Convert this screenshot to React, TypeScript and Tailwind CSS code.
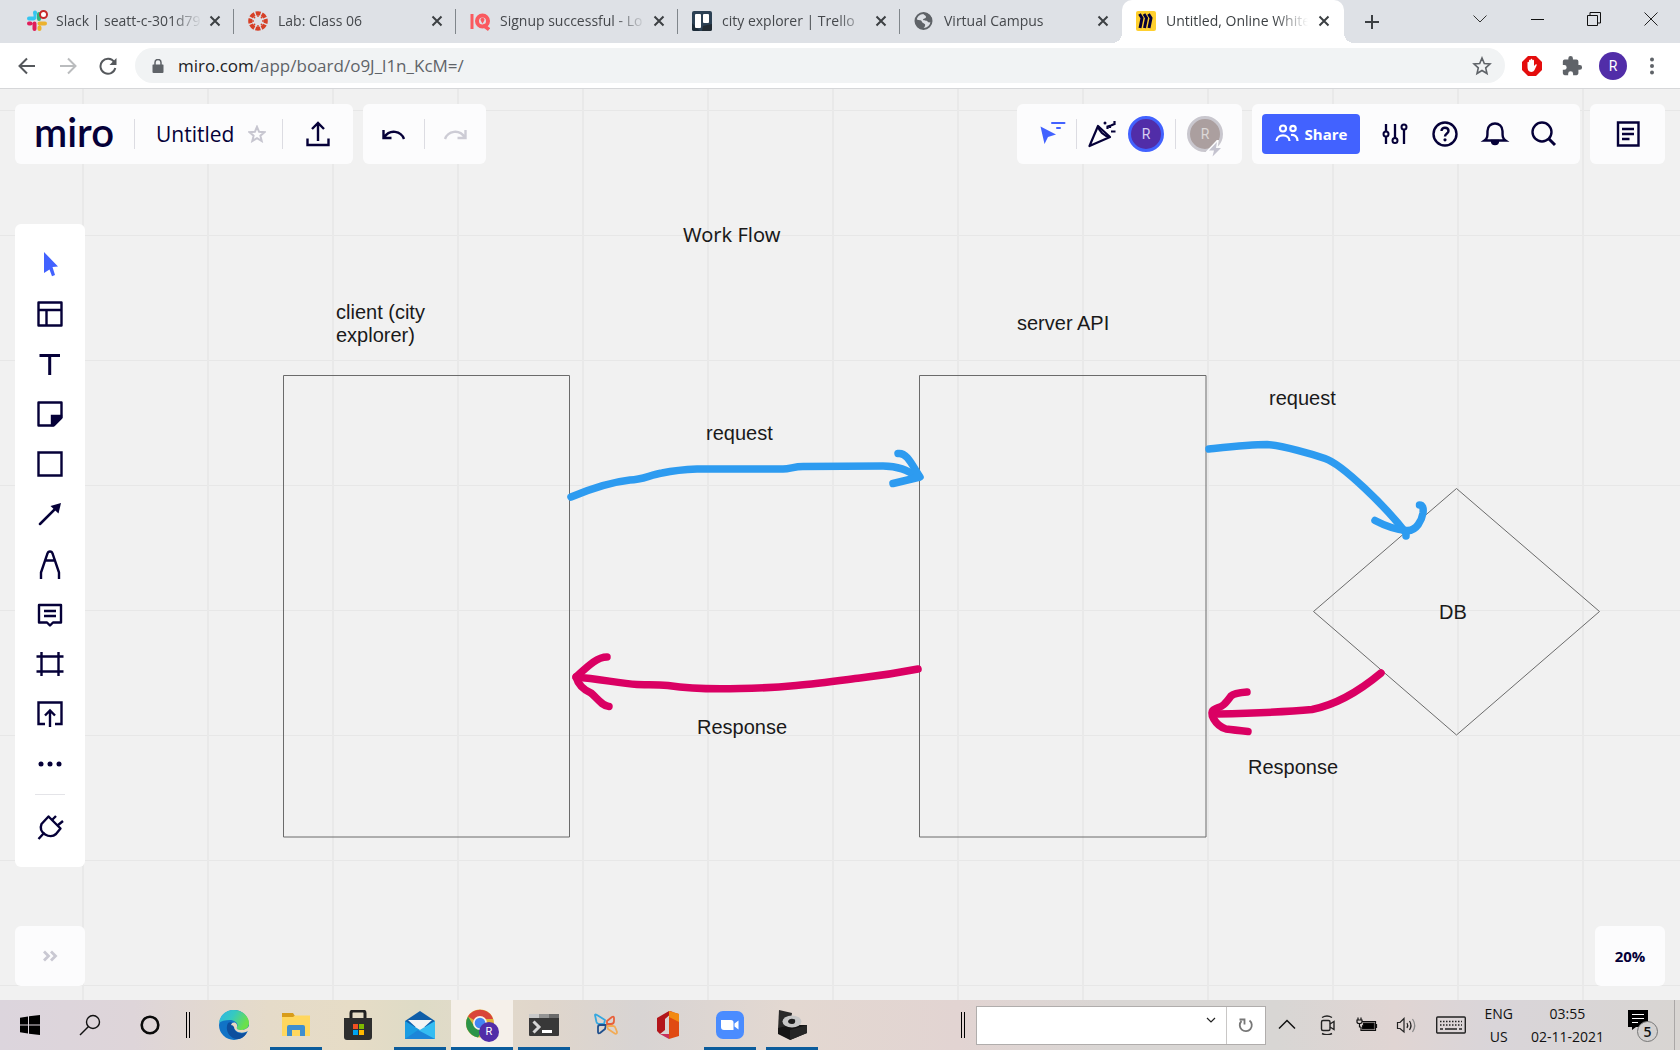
import type { ReactNode } from 'react';

const INK = '#050038';

type IconProps = { size?: number; box?: number; sw?: number; color?: string; fill?: string; children: ReactNode };

function Icon({ size = 30, box, sw = 2, color = INK, fill = 'none', children }: IconProps) {
  const b = box ?? size;
  return (
    <svg
      width={size}
      height={size}
      viewBox={`0 0 ${b} ${b}`}
      fill={fill}
      stroke={color}
      strokeWidth={sw}
      className="block shrink-0"
      aria-hidden="true"
    >
      {children}
    </svg>
  );
}

/* ---------- Browser tabs ---------- */

const SlackIcon = (
  <Icon size={22} sw={4} color="#36c5f0">
    <g strokeLinecap="round">
      <path d="M3 8.500H7.500M9 2.500V3" />
      <path d="M9 8V4" strokeWidth="3" />
      <path d="M13 4V9" stroke="#2eb67d" />
      <path d="M13.500 13.500H19M13.500 17.500V19" stroke="#ecb22e" />
      <path d="M8.500 13.500V19M3 13.500H4.500" stroke="#e01e5a" />
    </g>
    <circle cx="17.500" cy="4.500" r="3.500" stroke="#c62828" strokeWidth="2" fill="#fff" />
  </Icon>
);

const CanvasIcon = (
  <Icon size={20} sw={4} color="#d64027">
    <circle cx="10" cy="10" r="7.800" strokeDasharray="4.800 1.320" strokeDashoffset="2.400" />
    <g fill="#d64027" stroke="none">
      <circle cx="10" cy="5" r="0.900" />
      <circle cx="10" cy="15" r="0.900" />
      <circle cx="5" cy="10" r="0.900" />
      <circle cx="15" cy="10" r="0.900" />
      <circle cx="6.500" cy="6.500" r="0.900" />
      <circle cx="13.500" cy="6.500" r="0.900" />
      <circle cx="6.500" cy="13.500" r="0.900" />
      <circle cx="13.500" cy="13.500" r="0.900" />
    </g>
  </Icon>
);

const IqIcon = (
  <Icon size={20} sw={4} color="#fa5a5f">
    <path d="M2 3V18" strokeWidth="3" />
    <circle cx="12.500" cy="10" r="5.500" />
    <path d="M13 14L19 18.500" strokeWidth="3.500" />
    <path d="M12.500 12.800L10.800 9.800A2 2 0 1 1 14.200 9.800Z" fill="#fa5a5f" stroke="none" />
  </Icon>
);

const TrelloIcon = (
  <Icon size={20} color="none">
    <rect width="20" height="20" rx="2" fill="#2c4154" />
    <path d="M0 12L8 20H2A2 2 0 0 1 0 18Z" fill="#1c2b38" />
    <path d="M11 15L20 13V18A2 2 0 0 1 18 20H10Z" fill="#222b33" />
    <rect x="3" y="3" width="6" height="14" rx="1" fill="#fff" />
    <rect x="11" y="3" width="6" height="9" rx="1" fill="#fff" />
  </Icon>
);

const GlobeIcon = (
  <Icon size={20} sw={2}>
    <circle cx="9.500" cy="10" r="8" stroke="#5f6368" />
    <path
      d="M2 8C5 10 7 8 8 11C9 13 12 12 11 15C10.500 16.500 9 17 9 18C4 18 1 13 2 8ZM9 2C9 4 12 4 12 6C12 8 9 7 9 9C11 10 13 9 14 11C15 12 17 11 18 10C18 5 14 1 9 2Z"
      fill="#5f6368"
      stroke="none"
    />
  </Icon>
);

const MiroTabIcon = (
  <Icon size={20} color="#050038" sw={3}>
    <rect width="20" height="20" rx="2" fill="#ffd02f" stroke="none" />
    <path d="M3.500 3L6 7L4 17M8 3L10.500 7L8.500 17M12.500 3L15 7L13 17" />
  </Icon>
);

const tabs = [
  { title: 'Slack | seatt-c-301d79', icon: SlackIcon },
  { title: 'Lab: Class 06', icon: CanvasIcon },
  { title: 'Signup successful - Lo', icon: IqIcon },
  { title: 'city explorer | Trello', icon: TrelloIcon },
  { title: 'Virtual Campus', icon: GlobeIcon },
  { title: 'Untitled, Online White', icon: MiroTabIcon },
];

function CloseX() {
  return (
    <Icon size={12} color="#3c4043" sw={2}>
      <path d="M1.500 1.500L10.500 10.500M10.500 1.500L1.500 10.500" />
    </Icon>
  );
}

function TabStrip() {
  return (
    <div className="flex h-[43px] bg-[#dee1e6] pl-3">
      {tabs.map((t, i) => {
        const active = i === tabs.length - 1;
        return (
          <div
            key={t.title}
            className={
              active
                ? 'relative flex w-[222px] shrink-0 items-center rounded-t-[10px] bg-white pr-[14px] pb-px pl-[14px]'
                : 'relative flex w-[222px] shrink-0 items-center pr-[13px] pb-px pl-[14px]'
            }
          >
            <span className="flex w-[22px] shrink-0">{t.icon}</span>
            <button
              className={
                active
                  ? 'ml-2 min-w-0 flex-1 overflow-hidden pb-px text-left text-sm whitespace-nowrap text-[#3c4043] [mask-image:linear-gradient(to_right,black_108px,transparent_142px)]'
                  : 'ml-2 min-w-0 flex-1 overflow-hidden pb-px text-left text-sm whitespace-nowrap text-[#45484c] [mask-image:linear-gradient(to_right,black_115px,transparent_146px)]'
              }
            >
              {t.title}
            </button>
            <button className="ml-2 shrink-0" aria-label={`Close ${t.title}`}>
              <CloseX />
            </button>
            {i < 4 && <span className="absolute top-[9px] right-0 h-[25px] w-px bg-[#80868b]" />}
            {active && (
              <>
                <span className="absolute bottom-0 -left-[10px] h-[10px] w-[10px] bg-[radial-gradient(circle_at_0_0,transparent_10px,white_10px)]" />
                <span className="absolute -right-[10px] bottom-0 h-[10px] w-[10px] bg-[radial-gradient(circle_at_100%_0,transparent_10px,white_10px)]" />
              </>
            )}
          </div>
        );
      })}
      <button aria-label="New tab" className="ml-5 flex items-center">
        <Icon size={16} color="#3c4043">
          <path d="M8 1V15M1 8H15" />
        </Icon>
      </button>
      <div className="ml-auto flex h-[37px] shrink-0 items-center">
        <button aria-label="Search tabs" className="flex w-[57px] justify-center">
          <Icon size={14} color="#333" sw={1}>
            <path d="M.5 3.500L7 10L13.500 3.500" />
          </Icon>
        </button>
        <button aria-label="Minimize" className="flex w-[57px] justify-center">
          <Icon size={14} color="#111" sw={1}>
            <path d="M1 7.500H14" />
          </Icon>
        </button>
        <button aria-label="Restore" className="flex w-[57px] justify-center">
          <Icon size={14} color="#111" sw={1}>
            <path d="M.5 3.500H10.500V13.500H.5ZM3 3.500V.5H13.500V11H10.500" />
          </Icon>
        </button>
        <button aria-label="Close window" className="flex w-[58px] justify-center">
          <Icon size={14} color="#222" sw={1}>
            <path d="M.5 .5L13.500 13.500M13.500 .5L.5 13.500" />
          </Icon>
        </button>
      </div>
    </div>
  );
}

function AddressBar() {
  return (
    <div className="flex h-[46px] items-center border-b border-[#d6d7d9] bg-white pr-[19px] pl-[18px]">
      <button aria-label="Back">
        <Icon size={18} color="#55585c">
          <path d="M17 9H2M9 1.500L1.500 9L9 16.500" />
        </Icon>
      </button>
      <button aria-label="Forward" className="ml-[23px]">
        <Icon size={18} color="#babcbe">
          <path d="M1 9H16M9 1.500L16.500 9L9 16.500" />
        </Icon>
      </button>
      <button aria-label="Reload" className="ml-[22px]">
        <Icon size={18} color="#55585c">
          <path d="M15.200 5A7.500 7.500 0 1 0 16.300 11" />
          <path d="M17.500 1V8H10.500Z" fill="#55585c" stroke="none" />
        </Icon>
      </button>
      <div className="ml-[18px] flex h-[35px] flex-1 items-center rounded-full bg-[#f1f3f4] pr-[13px] pl-4">
        <Icon size={14} color="none">
          <path d="M2 5.500H12A.8.8 0 0 1 12.500 6V13A1 1 0 0 1 11.500 14H2.500A1 1 0 0 1 1.500 13V6A.8.8 0 0 1 2 5.500Z" fill="#5f6368" />
          <path d="M4 6V3.500A3 3 0 0 1 10 3.500V6" stroke="#5f6368" strokeWidth="1.500" />
        </Icon>
        <div className="relative ml-[13px] flex-1 text-[17px] leading-6">
          <span aria-hidden="true" className="block text-[#5f6368]">
            <span className="text-[#202124]">miro.com</span>/app/board/o9J_l1n_KcM=/
          </span>
          <input
            aria-label="Address"
            defaultValue="miro.com/app/board/o9J_l1n_KcM=/"
            className="absolute inset-0 w-full bg-transparent text-transparent outline-none"
          />
        </div>
        <button aria-label="Bookmark">
          <Icon size={20} color="#5f6368" sw={1.6}>
            <path d="M10 2L12.300 7.500L18 8L13.700 11.900L15 17.500L10 14.500L5 17.500L6.300 11.900L2 8L7.700 7.500Z" />
          </Icon>
        </button>
      </div>
      <button aria-label="Ad blocker" className="ml-4">
        <Icon size={22} color="none">
          <path d="M7 1H15L21 7V15L15 21H7L1 15V7Z" fill="#e40d0d" />
          <path
            d="M6.500 10V7.500C6.500 6.500 8 6.500 8 7.500V5.500C8 4.500 9.600 4.500 9.600 5.500V4.500C9.600 3.500 11.300 3.500 11.300 4.500V5.500C11.300 4.500 13 4.500 13 5.500V11L14.500 9.500C15.500 9 16.200 9.800 15.500 10.700L13.500 15C12.500 17.500 8.500 17.500 7.300 15.500C6.500 14 6.500 12 6.500 10Z"
            fill="#fff"
          />
        </Icon>
      </button>
      <button aria-label="Extensions" className="ml-[18px]">
        <Icon size={22} box={24} color="none" fill="#5f6368">
          <path d="M20.500 11H19V7a2 2 0 0 0-2-2h-4V3.500a2.500 2.500 0 0 0-5 0V5H4a2 2 0 0 0-2 2v3.800h1.500a2.700 2.700 0 0 1 0 5.400H2V20a2 2 0 0 0 2 2h3.800v-1.500a2.700 2.700 0 0 1 5.400 0V22H17a2 2 0 0 0 2-2v-4h1.500a2.500 2.500 0 0 0 0-5z" />
        </Icon>
      </button>
      <button className="ml-4 flex h-7 w-7 items-center justify-center rounded-full bg-[#512da8] font-['Roboto'] text-sm text-white">
        R
      </button>
      <button aria-label="Menu" className="ml-4">
        <Icon size={18} color="none" fill="#5f6368">
          <circle cx="9" cy="2.500" r="2" />
          <circle cx="9" cy="9" r="2" />
          <circle cx="9" cy="15.500" r="2" />
        </Icon>
      </button>
    </div>
  );
}

/* ---------- Board header ---------- */

function Rule({ className = '' }: { className?: string }) {
  return <span className={`h-[30px] w-px bg-[#dcdce2] ${className}`} />;
}

function BoardHeader() {
  return (
    <header className="flex items-start gap-[10px] px-[15px] pt-[15px]">
      <div className="flex h-[60px] items-center rounded-md bg-[#fcfcfd] pr-5 pl-[19px]">
        <a href="#board" className="font-['Lato'] text-[40px] leading-[48px] font-semibold text-[#050038]">
          <span className="block pb-1">miro</span>
        </a>
        <Rule className="ml-5" />
        <button className="ml-[21px] text-[21px] leading-7 font-medium text-[#050038]">Untitled</button>
        <button aria-label="Star board" className="ml-[14px]">
          <Icon size={18} color="#c7c6d0" sw={2}>
            <path d="M9 1.800L11.100 6.800L16.500 7.200L12.400 10.700L13.700 16L9 13.100L4.300 16L5.600 10.700L1.500 7.200L6.900 6.800Z" />
          </Icon>
        </button>
        <Rule className="ml-4" />
        <button aria-label="Export" className="ml-5">
          <Icon size={30} sw={2.4}>
            <path d="M15 22V4.500M9 10L15 4L21 10M4.500 19.500V26H25.500V19.500" />
          </Icon>
        </button>
      </div>
      <div className="flex h-[60px] items-center rounded-md bg-[#fcfcfd] px-[17px]">
        <button aria-label="Undo">
          <Icon size={26} sw={2.4}>
            <path d="M24 18C21 10 10 7.500 4 16.500M3.500 9V17H11.500" />
          </Icon>
        </button>
        <Rule className="mx-[18px]" />
        <button aria-label="Redo">
          <Icon size={26} color="#cdccd5" sw={2.4}>
            <path d="M2 18C5 10 16 7.500 22 16.500M22.500 9V17H14.500" />
          </Icon>
        </button>
      </div>

      <div className="ml-auto flex h-[60px] items-center rounded-md bg-[#fcfcfd] pr-[19px] pl-[22px]">
        <button aria-label="Collaborator cursors">
          <Icon size={30} color="#4262ff">
            <path d="M1.500 7.500L17 15.500L9 18L5.500 25Z" fill="#4262ff" stroke="none" />
            <path d="M13 4H25.500M18 9H21" strokeLinecap="round" />
          </Icon>
        </button>
        <Rule className="ml-[7px]" />
        <button aria-label="Reactions" className="ml-[10px]">
          <Icon size={30} sw={2.2}>
            <path d="M11 7L23 18L2.500 27Z" strokeLinejoin="round" />
            <path d="M11 7C12 12 16.500 17 23 18" />
            <path d="M20.500 10V7.500L24 6.500L27.500 5M27.500 2V6M23 7V9M24 12.500H28.500" />
            <circle cx="18" cy="4" r="1.500" fill={INK} stroke="none" />
          </Icon>
        </button>
        <button className="ml-[11px] flex h-9 w-9 items-center justify-center rounded-full border-[3px] border-[#4262ff] bg-[#512da8] font-['Roboto'] text-sm text-[#d6cdf0]">
          R
        </button>
        <Rule className="ml-[11px]" />
        <button className="relative ml-[11px] flex h-9 w-9 items-center justify-center rounded-full border-[3px] border-[#c9c7ce] bg-[#ab9f9f] font-['Roboto'] text-sm text-[#dcd8d8]">
          R
          <span className="absolute -right-[4px] -bottom-[9px]">
            <Icon size={18} color="#fcfcfd" sw={3} fill="#c4c3cf">
              <path d="M11 2L3 10.500H8L6.500 16.500L15 8H10Z" style={{ paintOrder: 'stroke' }} />
            </Icon>
          </span>
        </button>
      </div>

      <div className="flex h-[60px] items-center rounded-md bg-[#fcfcfd] pr-[22px] pl-[10px]">
        <button className="flex h-10 w-[98px] items-center justify-center gap-[6px] rounded bg-[#4262ff] text-[15px] font-bold text-white">
          <Icon size={24} color="#fff" sw={2.2}>
            <circle cx="8" cy="6.500" r="3" />
            <circle cx="18" cy="6.500" r="2.700" />
            <path d="M1.500 19C1.500 11.500 14.500 11.500 14.500 19M16 13C20 12.500 22.500 15 22.500 19" />
          </Icon>
          Share
        </button>
        <button aria-label="Settings" className="ml-5">
          <Icon size={30}>
            <circle cx="6" cy="15" r="2.500" />
            <circle cx="15" cy="21.500" r="2.500" />
            <circle cx="24" cy="8" r="2.500" />
            <path d="M6 5V12.500M6 17.500V25M15 5V19M24 10.500V25" strokeWidth="2.300" />
          </Icon>
        </button>
        <button aria-label="Help" className="ml-5">
          <Icon size={30} sw={2.400}>
            <circle cx="15" cy="15" r="11.500" />
            <path d="M11.500 12C11.500 7.500 18.500 8 18.500 12C18.500 14.500 15 14.500 15 17.500" />
            <circle cx="15" cy="20.800" r="1.600" fill={INK} stroke="none" />
          </Icon>
        </button>
        <button aria-label="Notifications" className="ml-5">
          <Icon size={30} sw={2.400}>
            <path d="M4.500 21.500C7.500 19.500 7.500 17 7.500 12C7.500 2 22.500 2 22.500 12C22.500 17 22.500 19.500 25.500 21.500Z" />
            <path d="M12 22C12 26 18 26 18 22Z" fill={INK} />
          </Icon>
        </button>
        <button aria-label="Search" className="ml-[18px]">
          <Icon size={30} sw={2.400}>
            <circle cx="14" cy="13" r="9.500" />
            <path d="M20.500 19.500L27 26" strokeWidth="3" />
          </Icon>
        </button>
      </div>

      <div className="flex h-[60px] w-[75px] items-center justify-center rounded-md bg-[#fcfcfd]">
        <button aria-label="Notes">
          <Icon size={30} sw={2.400}>
            <path d="M5 3.500H25.500V26.500H5Z" />
            <path d="M9 10H21M9 15H21M9 20H16.500" />
          </Icon>
        </button>
      </div>
    </header>
  );
}

/* ---------- Left tool palette ---------- */

const tools: { name: string; art: ReactNode }[] = [
  {
    name: 'Select',
    art: <path d="M9 3L23 17.500L17.500 18L20 26L17 27.200L14.500 20.500L9 24Z" fill="#4262ff" stroke="none" />,
  },
  {
    name: 'Templates',
    art: <path d="M3.500 3.500H26.500V26.500H3.500ZM3.500 11H26.500M11.500 11V26.500" strokeLinejoin="round" />,
  },
  {
    name: 'Text',
    art: <path d="M4.500 6.500H25M14.700 6.500V26" strokeWidth="3" />,
  },
  {
    name: 'Sticky note',
    art: (
      <>
        <path d="M3.500 3.500H26.500V18.500L18.500 26.500H3.500Z" strokeLinejoin="round" />
        <path d="M17 26V17H26V19L19 26Z" fill={INK} />
      </>
    ),
  },
  { name: 'Shape', art: <path d="M3.500 3.500H26.500V26.500H3.500Z" /> },
  {
    name: 'Connection line',
    art: (
      <>
        <path d="M5 25L21 9" strokeLinecap="round" strokeWidth="2.500" />
        <path d="M26 4L23.500 14.500L15.500 7Z" fill={INK} stroke="none" />
      </>
    ),
  },
  {
    name: 'Pen',
    art: <path d="M6 30V23.500L12.500 4.500Q13 2.500 15 2.500T17.500 4.500L24 23.500V30M11 11.500H19" />,
  },
  {
    name: 'Comment',
    art: <path d="M4 6H26V23.500H18L15 26.500L12 23.500H4ZM9 12H21M9 17H21" strokeLinejoin="round" />,
  },
  { name: 'Frame', art: <path d="M6.500 3V27M23.500 3V27M1.500 7.500H28.500M1.500 22.500H28.500" /> },
  {
    name: 'Upload',
    art: <path d="M10 25H3.500V3.500H26.500V25H20M15 28V12M10 16.500L15 11.500L20 16.500" />,
  },
  {
    name: 'More tools',
    art: (
      <g fill={INK} stroke="none">
        <circle cx="6" cy="15" r="2.500" />
        <circle cx="15" cy="15" r="2.500" />
        <circle cx="24" cy="15" r="2.500" />
      </g>
    ),
  },
];

function Palette() {
  return (
    <nav className="mt-[60px] ml-[15px] flex w-[70px] flex-col items-center rounded-md bg-white py-[15px]">
      {tools.map((t) => (
        <button key={t.name} aria-label={t.name} className="flex h-[50px] w-[50px] items-center justify-center">
          <Icon size={30} sw={2.4}>
            {t.art}
          </Icon>
        </button>
      ))}
      <span className="mt-[5px] mb-[7px] h-px w-[30px] bg-[#e4e4e8]" />
      <button aria-label="Apps" className="flex h-[50px] w-[50px] items-center justify-center">
        <Icon size={30} sw={2.400}>
          <path d="M13.500 4.500L25.500 16.500L21 22C15 27.500 3 21 6.500 12Z" strokeLinejoin="round" />
          <path d="M17 8L21 4M22.500 13.500L28 9M9.500 20.500L3.500 27" />
        </Icon>
      </button>
    </nav>
  );
}

/* ---------- Diagram ---------- */

function Diagram() {
  return (
    <div className="absolute inset-0 overflow-hidden bg-[linear-gradient(to_right,#e9e9e9_2px,transparent_2px),linear-gradient(to_bottom,#e7e7e7_1px,transparent_1px)] bg-[size:125px_125px] bg-[position:82px_21px] font-['Liberation_Sans'] text-[20px] leading-[23px] text-[#1a1a1a]">
      <svg width="1680" height="911" viewBox="0 89 1680 911" fill="none" className="absolute top-0 left-0" aria-hidden="true">
        <g stroke="#6b6b6b" strokeWidth="1">
          <path d="M283.500 375.500H569.500V837H283.500ZM919.500 375.500H1206V837H919.500Z" />
          <path d="M1456.500 488.500L1599.500 611.500L1456.500 735L1313.500 611.500Z" />
        </g>
        <g stroke="#2d9bf0" strokeWidth="7.500" strokeLinecap="round" strokeLinejoin="round">
          <path d="M571 497C590 489 612 482 630 480C642 480 650 475 662 473C674 470.500 684 469.500 697 469L783 469C790 469 794 466.500 803 466.500L883 466C898 466 907 470 918 477" />
          <path d="M898 453.500C907 452 912 465 920 477L893 483.500" />
          <path d="M1209 449C1228 447 1250 444.500 1267 444.500C1284 446 1312 454 1325 458.500C1342 464 1386 507 1406 533V536" />
          <path d="M1375 520.500Q1391 529 1406 530.500C1417 532 1422 519 1423 513Q1424 505 1419.500 505" />
        </g>
        <g stroke="#da0063" strokeWidth="7.500" strokeLinecap="round" strokeLinejoin="round">
          <path d="M918 669Q890 674.500 860 678C820 683 785 688 740 688.500C710 689.500 685 688 668 685.500C655 684 645 685 637 684.500C620 683.500 600 679 576 677" />
          <path d="M607 657C596 657 586 668 576 677C578 684 584 690 591 693C597 698 602 706 609 706.500" />
          <path d="M1381 673Q1345 703 1312 709.500Q1280 712.500 1217 714" />
          <path d="M1247 692Q1234 693 1231 696C1223 707 1222 706 1215 709C1207 712 1216 726 1226 729Q1234 730 1248 731.500" />
        </g>
      </svg>
      <h1 className="absolute top-[132px] left-[683px] font-['Noto_Sans'] leading-7 whitespace-nowrap">Work Flow</h1>
      <p className="absolute top-[212px] left-[336px] w-[120px]">client (city explorer)</p>
      <p className="absolute top-[223px] left-[1017px] whitespace-nowrap">server API</p>
      <p className="absolute top-[333px] left-[706px]">request</p>
      <p className="absolute top-[298px] left-[1269px]">request</p>
      <p className="absolute top-[627px] left-[697px]">Response</p>
      <p className="absolute top-[667px] left-[1248px]">Response</p>
      <p className="absolute top-[512px] left-[1439px]">DB</p>
    </div>
  );
}

/* ---------- Taskbar ---------- */

const EdgeIcon = (
  <Icon size={32} color="none">
    <defs>
      <linearGradient id="edgeTop" x1="0" y1="0" x2="1" y2="0.400">
        <stop offset="0" stopColor="#2fb4e8" />
        <stop offset="0.500" stopColor="#36c9c0" />
        <stop offset="1" stopColor="#6be04a" />
      </linearGradient>
    </defs>
    <circle cx="16" cy="16" r="15" fill="#1173c6" />
    <path d="M1 14C2 5 9 1 16 1C25 1 31 8 31 14C31 19 27 21 23 21C20 21 18 20 19 18C21 15 17 11 12 11C7 11 3 12 1 14Z" fill="url(#edgeTop)" />
    <path d="M10 14C6 22 13 31 21 30C25 29 28 26 29 23C24 26 16 24 16 18C16 15 13 12 10 14Z" fill="#0d4f9e" />
    <path d="M13 16C14 12 20 13 19 18C18 20 20 21 23 21C27 21 30 19 31 17V21C27 25 17 25 16 18Q15 16 13 16Z" fill="#ead9c2" />
  </Icon>
);

const ExplorerIcon = (
  <Icon size={30} color="none">
    <path d="M1 3H12L14 6V10H1Z" fill="#d89c1a" />
    <path d="M1 7H12L14 5.500H29V26H1Z" fill="#ffd75e" />
    <path d="M6 17Q6 15 8 15H22Q24 15 24 17V26H19V20H11V26H6Z" fill="#3f8fcf" />
  </Icon>
);

const StoreIcon = (
  <Icon size={30} color="none">
    <path d="M8 9V3Q8 1 10 1H20Q22 1 22 3V9" stroke="#222" strokeWidth="3" />
    <path d="M1 8H29V27Q29 30 26 30H4Q1 30 1 27Z" fill="#2e2e2e" />
    <path d="M10 14H15V19H10Z" fill="#f25022" />
    <path d="M16 14H21V19H16Z" fill="#7fba00" />
    <path d="M10 20H15V25H10Z" fill="#00a4ef" />
    <path d="M16 20H21V25H16Z" fill="#ffb900" />
  </Icon>
);

const MailIcon = (
  <Icon size={30} color="none">
    <path d="M0 11L15 1L30 11V17H0Z" fill="#0f5ea8" />
    <path d="M3 10H27L15 21Z" fill="#f4f4f4" />
    <path d="M0 11L30 29H0Z" fill="#1b9de2" />
    <path d="M30 11L8 24L16 29H30Z" fill="#35bdf2" />
    <path d="M13 20L30 29H8L0 29Z" fill="#1c86d8" />
  </Icon>
);

const ChromeIcon = (
  <Icon size={32} color="none">
    <circle cx="14" cy="14.500" r="14" fill="#e0b53a" />
    <path d="M14 14.500L2 7.500A14 14 0 0 1 26 7.500L27 10H14Z" fill="#d9453a" />
    <path d="M2 7.500A14 14 0 0 0 12 28.400L18 19L14 14.500L8 17Z" fill="#2b9449" />
    <circle cx="14" cy="14" r="7" fill="#f6f1ea" />
    <circle cx="14" cy="14" r="5.300" fill="#4285f4" />
  </Icon>
);

const TerminalIcon = (
  <Icon size={30} color="none">
    <rect y="4" width="30" height="22" rx="1" fill="#383838" />
    <path d="M0 8V4H10V8Z" fill="#c9c9c9" />
    <path d="M10 4H20V8H10Z" fill="#949494" />
    <path d="M20 4H30V8H20Z" fill="#6b6b6b" />
    <path d="M4.500 11.500L10 17L4.500 22.500" stroke="#d5d5d5" strokeWidth="3" />
    <path d="M13 21.500H23" stroke="#fff" strokeWidth="3" />
  </Icon>
);

const ButterflyIcon = (
  <Icon size={26} sw={1.800}>
    <g strokeLinejoin="round">
      <path d="M2 3Q2 2 4 3L12 8L11 12H6Q4 12 3.500 10Z" stroke="#35a7df" />
      <path d="M5 20V15Q5 13 7 13H13L12 17L7 21Q5 22 5 20Z" stroke="#20508d" />
      <path d="M14 9L19 5Q21 4 21 6V9Q21 12 18 12H14Z" stroke="#e8603a" />
      <path d="M14 14H20Q22 14 22.500 16L24 20Q24 23 21 21L15 17Z" stroke="#f2ab55" />
    </g>
  </Icon>
);

const OfficeIcon = (
  <Icon size={30} color="none">
    <path d="M4 8L16 1L20 2L12 9V20L7 24L4 21Z" fill="#b3161b" />
    <path d="M16 1L26 4V26L16 29V25V7Z" fill="#e04a12" />
    <path d="M16 1L26 4V12L16 7Z" fill="#f28a13" />
    <path d="M7 24H16V29Z" fill="#c9305a" />
  </Icon>
);

const ZoomIcon = (
  <Icon size={28} color="none">
    <rect width="28" height="28" rx="7" fill="#4a8cff" />
    <path d="M5 9H15Q17.500 9 17.500 11.500V19H8Q5 19 5 16ZM18.500 12.500L22.500 9.500V18.500L18.500 15.500Z" fill="#fff" />
  </Icon>
);

const CubeIcon = (
  <Icon size={30} color="none">
    <path d="M2 0L15 3L13 17L1 20Z" fill="#2a2a2a" />
    <path d="M1 18L14 15L30 15V23L13 30L1 24Z" fill="#151515" />
    <path d="M13 20L30 15V23L13 30Z" fill="#262626" />
    <ellipse cx="15" cy="11.500" rx="9.500" ry="6" fill="#c7c7c7" />
    <path d="M11 11Q13 7.500 18 9.500Q19 14 15 14Q11 14 11 11Z" fill="#1d1d1d" />
  </Icon>
);

const apps: { name: string; icon: ReactNode; running: boolean; active?: boolean }[] = [
  { name: 'Edge', icon: EdgeIcon, running: false },
  { name: 'File Explorer', icon: ExplorerIcon, running: true },
  { name: 'Store', icon: StoreIcon, running: false },
  { name: 'Mail', icon: MailIcon, running: true },
  { name: 'Chrome', icon: ChromeIcon, running: true, active: true },
  { name: 'Terminal', icon: TerminalIcon, running: true },
  { name: 'Editor', icon: ButterflyIcon, running: false },
  { name: 'Office', icon: OfficeIcon, running: false },
  { name: 'Zoom', icon: ZoomIcon, running: true },
  { name: 'Viewer', icon: CubeIcon, running: true },
];

function Grip() {
  return <span className="h-[26px] w-1 shrink-0 border-x border-black" />;
}

function Taskbar() {
  return (
    <footer className="flex h-[50px] items-center bg-[linear-gradient(to_right,#dcd5dd_0%,#ded5d9_8%,#e5dbc9_16%,#e6dcc6_21%,#dedbc6_25%,#e2dacb_29%,#e0d6cb_32%,#d8d4d3_38%,#e3d8d1_47%,#e2d4d2_57%,#d9d6d4_66%,#d8d6d4_76%,#e0d5d3_83%,#d9d5d9_89%,#d8d5d2_100%)] text-[14px] text-[#111]">
      <button aria-label="Start" className="flex w-[60px] justify-center">
        <Icon size={20} color="none" fill="#000">
          <path d="M0 2.800L8 1.500V9.500H0ZM9 1.300L20 0V9.500H9ZM0 10.500H8V18.500L0 17.300ZM9 10.500H20V20L9 18.700Z" />
        </Icon>
      </button>
      <button aria-label="Search Windows" className="flex w-[60px] justify-center">
        <Icon size={22} color="#111" sw={1.4}>
          <circle cx="14" cy="8" r="6.500" />
          <path d="M9.500 12.500L1 21" />
        </Icon>
      </button>
      <button aria-label="Cortana" className="flex w-[60px] justify-center">
        <Icon size={22} color="#0a0a0a" sw={2.600}>
          <circle cx="11" cy="11" r="8.300" />
        </Icon>
      </button>
      <span className="ml-[6px] flex">
        <Grip />
      </span>
      <div className="ml-[13px] flex h-full">
        {apps.map((a) => (
          <button
            key={a.name}
            aria-label={a.name}
            className={
              a.active
                ? 'relative flex h-full w-[62px] items-center justify-center bg-[#f5f0ea]'
                : 'relative flex h-full w-[62px] items-center justify-center'
            }
          >
            {a.icon}
            {a.active && (
              <span className="absolute top-[22px] left-[28px] flex h-5 w-5 items-center justify-center rounded-full bg-[#512da8] font-['Roboto'] text-[11px] text-white">
                R
              </span>
            )}
            {a.running && (
              <span className={a.active ? 'absolute inset-x-0 bottom-0 h-[3px] bg-[#0b5c9c]' : 'absolute inset-x-[5px] bottom-0 h-[3px] bg-[#0b5c9c]'} />
            )}
          </button>
        ))}
      </div>
      <div className="ml-auto flex h-full shrink-0 items-center">
        <Grip />
        <div className="ml-[11px] flex h-[39px] w-[290px] border border-[#b0adac] bg-white">
          <div className="relative flex flex-1 border-r border-[#c9c7c6]">
            <input aria-label="Address toolbar" className="w-full bg-transparent px-2 outline-none" />
            <button aria-label="Show history" className="absolute top-2 right-[10px]">
              <Icon size={10} color="#222" sw={1.2}>
                <path d="M1 3L5 7L9 3" />
              </Icon>
            </button>
          </div>
          <button aria-label="Refresh" className="flex w-[38px] items-center justify-center">
            <Icon size={16} color="#777" sw={1.800}>
              <path d="M11.500 3.500A6 6 0 1 1 3.500 4M1.500 2.500H6.500V7.500" />
            </Icon>
          </button>
        </div>
        <button aria-label="Show hidden icons" className="ml-3">
          <Icon size={18} color="#111" sw={1.5}>
            <path d="M1 12.500L9 4.500L17 12.500" />
          </Icon>
        </button>
        <button aria-label="Meet now" className="ml-[22px]">
          <Icon size={20} color="#222" sw={1.400}>
            <rect x="3.500" y="5.500" width="8.500" height="10" rx="1.500" />
            <path d="M12 9L16 6.500V14.500L12 12M4 2.500Q9 -.5 14 2.500M4 18.500Q9 21 14 18.500" />
          </Icon>
        </button>
        <button aria-label="Battery" className="ml-[18px]">
          <Icon size={22} color="#111" sw={1.200}>
            <path d="M6 7.500H19.500V16.500H5V13" />
            <path d="M7.500 9H18V15H6.500V12L7.500 11Z" fill="#000" />
            <path d="M20.500 10V14" />
            <path d="M2 3.500V6M5 3.500V6M1 6H6V8Q6 9.500 3.500 9.500Q1 9.500 1 8ZM3.500 9.500V13H5" />
          </Icon>
        </button>
        <button aria-label="Volume" className="ml-[18px]">
          <Icon size={22} color="#222" sw={1.200}>
            <path d="M1.500 8.500H4L8 4.500V18L4 14.500H1.500Z" />
            <path d="M11 9Q12.500 11.500 11 14M13.500 7Q16.500 11.500 13.500 16" />
            <path d="M16.500 5Q21 11.500 16.500 18" stroke="#888" />
          </Icon>
        </button>
        <button aria-label="Touch keyboard" className="ml-[18px]">
          <Icon size={30} color="#222" sw={1.400}>
            <rect x=".7" y="7" width="28.600" height="16" rx="1" />
            <path d="M4 11.500H26M4 15H26" strokeDasharray="1.500 1.500" />
            <path d="M4 19H7M9 19H21M23 19H26" />
          </Icon>
        </button>
        <div className="ml-[18px] text-center leading-[23px]">
          <div>ENG</div>
          <div>US</div>
        </div>
        <div className="ml-[18px] text-center leading-[23px]">
          <div>03:55</div>
          <div>02-11-2021</div>
        </div>
        <button className="relative mr-[14px] ml-[24px] flex h-[30px] w-[32px]" aria-label="Notification center, 5 new">
          <Icon size={22} color="none">
            <path d="M0 0H20V17H8L4 20V17H0Z" fill="#000" />
            <path d="M4 4.500H16M4 8.500H16M4 12.500H10" stroke="#fff" strokeWidth="1.200" />
          </Icon>
          <span className="absolute top-[11px] left-[9px] flex h-[21px] w-[21px] items-center justify-center rounded-full border border-[#777] bg-[#d3d1d0] text-sm font-semibold">
            5
          </span>
        </button>
        <span className="mr-[5px] h-full w-px bg-[#aaa7a6]" />
      </div>
    </footer>
  );
}

export default function App() {
  return (
    <div className="flex min-h-screen flex-col overflow-hidden font-['Open_Sans','Noto_Sans',sans-serif]">
      <TabStrip />
      <AddressBar />
      <main className="relative flex flex-1 flex-col bg-[#f1f1f1]">
        <Diagram />
        <div className="relative flex flex-1 flex-col items-stretch">
          <BoardHeader />
          <div className="flex">
            <Palette />
          </div>
          <div className="mt-auto flex justify-between px-[15px] pb-[14px]">
            <button aria-label="Expand" className="flex h-[60px] w-[70px] items-center justify-center rounded-md bg-[#fcfcfd]">
              <Icon size={16} color="#c9c8d2" sw={2.800}>
                <path d="M2 3.500L6.500 8L2 12.500M9 3.500L13.500 8L9 12.500" />
              </Icon>
            </button>
            <button className="flex h-[60px] w-[70px] items-center justify-center rounded-md bg-[#fcfcfd] text-[15px] font-bold text-[#050038]">
              20%
            </button>
          </div>
        </div>
      </main>
      <Taskbar />
    </div>
  );
}
